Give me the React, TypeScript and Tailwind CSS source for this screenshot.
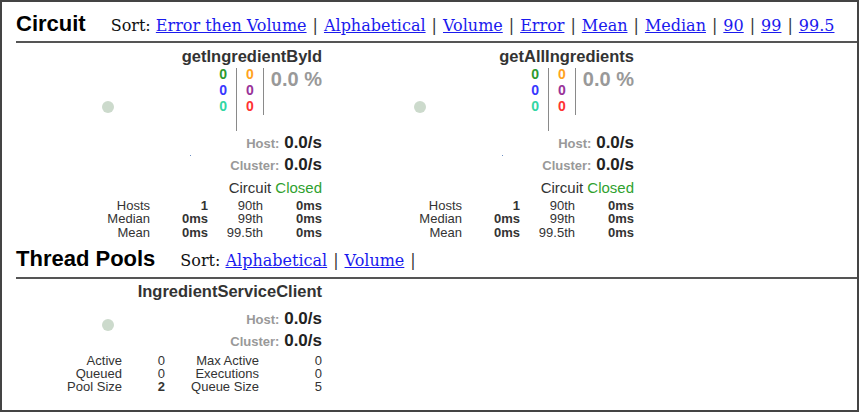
import React from 'react';

const sans = { fontFamily: '"Liberation Sans", Arial, sans-serif' };
const serif = { fontFamily: '"DejaVu Serif", "Liberation Serif", serif' };

const Sep = () => <span className="mx-[6px] text-[#333]">|</span>;

const SortBar: React.FC<{ items: string[]; trailing?: boolean }> = ({ items, trailing }) => (
  <span className="ml-[25px] text-[16px] leading-none text-[#111]" style={serif}>
    Sort:{' '}
    {items.map((it, i) => (
      <React.Fragment key={it}>
        {i > 0 && <Sep />}
        <a href="#" className="text-[#1a1aee] underline">
          {it}
        </a>
      </React.Fragment>
    ))}
    {trailing && <Sep />}
  </span>
);

const Circle = ({ className }: { className: string }) => (
  <div className={`absolute w-[12px] h-[12px] rounded-full bg-[#ccdacc] ${className}`} />
);

const HostLine = ({ label }: { label: string }) => (
  <div className="text-right text-[17px] leading-[22px] font-bold text-[#222]">
    <span className="text-[13px] leading-none text-[#999]">{label}:</span> 0.0/s
  </div>
);

const CircuitMonitor = ({ name }: { name: string }) => (
  <div className="relative w-[312px] pr-[6px] pt-[4px]" style={sans}>
    <Circle className="left-[86px] top-[58px]" />
    <div className="absolute left-[174px] top-[112px] w-px h-px bg-[#6a8fc4]" />
    <div className="text-right text-[16.5px] leading-[19px] font-bold text-[#333]">{name}</div>
    <div className="flex justify-end items-start">
      <div className="text-right text-[14px] leading-[16px] font-bold">
        <div className="text-[#2e9a2e]">0</div>
        <div className="text-[#3838ff]">0</div>
        <div className="text-[#33d6a3]">0</div>
      </div>
      <div className="ml-[9px] mt-[2px] w-px h-[63px] bg-[#8a8a8a]" />
      <div className="ml-[9px] text-right text-[14px] leading-[16px] font-bold">
        <div className="text-[#ffa31f]">0</div>
        <div className="text-[#993399]">0</div>
        <div className="text-[#ff3333]">0</div>
      </div>
      <div className="ml-[9px] mt-[2px] w-px h-[47px] bg-[#8a8a8a]" />
      <div className="ml-[7px] text-[20px] leading-[26px] font-bold text-[#999]">0.0 %</div>
    </div>
    <div className="mt-px">
      <HostLine label="Host" />
      <HostLine label="Cluster" />
    </div>
    <div className="text-right text-[15px] leading-[23px] text-[#333]">
      Circuit <span className="text-[#2fa12f]">Closed</span>
    </div>
    <div className="grid grid-cols-[134px_58px_55px_59px] text-right text-[13px] leading-[13.3px] text-[#333]">
      <div>Hosts</div>
      <div className="font-bold">1</div>
      <div>90th</div>
      <div className="font-bold">0ms</div>
      <div>Median</div>
      <div className="font-bold">0ms</div>
      <div>99th</div>
      <div className="font-bold">0ms</div>
      <div>Mean</div>
      <div className="font-bold">0ms</div>
      <div>99.5th</div>
      <div className="font-bold">0ms</div>
    </div>
  </div>
);

const ThreadPoolMonitor = ({ name }: { name: string }) => (
  <div className="relative w-[312px] pr-[6px] pt-[3px]" style={sans}>
    <Circle className="left-[86px] top-[40px]" />
    <div className="text-right text-[16.5px] leading-[19px] font-bold text-[#333]">{name}</div>
    <div className="mt-[7px]">
      <HostLine label="Host" />
      <HostLine label="Cluster" />
    </div>
    <div className="mt-[2px] grid grid-cols-[106px_43px_94px_63px] text-right text-[13px] leading-[13.3px] text-[#333]">
      <div>Active</div>
      <div>0</div>
      <div>Max Active</div>
      <div>0</div>
      <div>Queued</div>
      <div>0</div>
      <div>Executions</div>
      <div>0</div>
      <div>Pool Size</div>
      <div className="font-bold">2</div>
      <div>Queue Size</div>
      <div>5</div>
    </div>
  </div>
);

export default function App() {
  return (
    <div className="w-[859px] h-[412px] bg-white border-2 border-[#444] overflow-hidden">
      <div className="ml-[14px] h-[41px] pt-[5px] border-b-2 border-[#555] leading-[34px] whitespace-nowrap">
        <span className="text-[22px] font-bold text-black" style={sans}>
          Circuit
        </span>
        <SortBar
          items={['Error then Volume', 'Alphabetical', 'Volume', 'Error', 'Mean', 'Median', '90', '99', '99.5']}
        />
      </div>
      <div className="ml-[14px] flex">
        <CircuitMonitor name="getIngredientById" />
        <CircuitMonitor name="getAllIngredients" />
      </div>
      <div className="ml-[14px] h-[40px] pt-px border-b-2 border-[#555] leading-[37px] whitespace-nowrap">
        <span className="text-[22px] font-bold text-black" style={sans}>
          Thread Pools
        </span>
        <SortBar items={['Alphabetical', 'Volume']} trailing />
      </div>
      <div className="ml-[14px] flex">
        <ThreadPoolMonitor name="IngredientServiceClient" />
      </div>
    </div>
  );
}
